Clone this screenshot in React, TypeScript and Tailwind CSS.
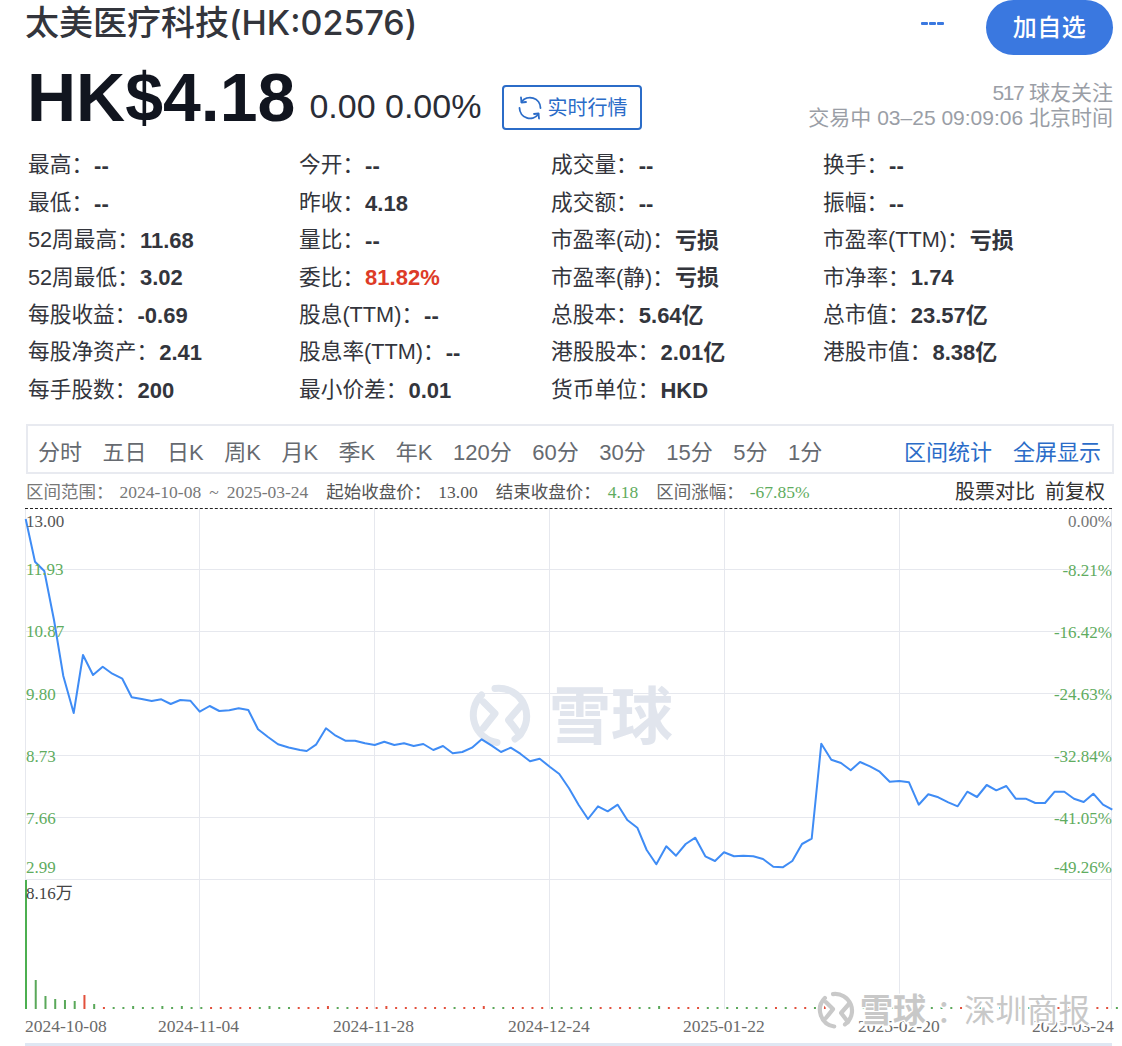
const SANS = "[font-family:'Liberation_Sans','Noto_Sans_CJK_SC',sans-serif]";

type Stat = { label: string; value: string; red?: boolean };

const stats: Stat[][] = [
  [
    { label: "最高", value: "--" },
    { label: "今开", value: "--" },
    { label: "成交量", value: "--" },
    { label: "换手", value: "--" },
  ],
  [
    { label: "最低", value: "--" },
    { label: "昨收", value: "4.18" },
    { label: "成交额", value: "--" },
    { label: "振幅", value: "--" },
  ],
  [
    { label: "52周最高", value: "11.68" },
    { label: "量比", value: "--" },
    { label: "市盈率(动)", value: "亏损" },
    { label: "市盈率(TTM)", value: "亏损" },
  ],
  [
    { label: "52周最低", value: "3.02" },
    { label: "委比", value: "81.82%", red: true },
    { label: "市盈率(静)", value: "亏损" },
    { label: "市净率", value: "1.74" },
  ],
  [
    { label: "每股收益", value: "-0.69" },
    { label: "股息(TTM)", value: "--" },
    { label: "总股本", value: "5.64亿" },
    { label: "总市值", value: "23.57亿" },
  ],
  [
    { label: "每股净资产", value: "2.41" },
    { label: "股息率(TTM)", value: "--" },
    { label: "港股股本", value: "2.01亿" },
    { label: "港股市值", value: "8.38亿" },
  ],
  [
    { label: "每手股数", value: "200" },
    { label: "最小价差", value: "0.01" },
    { label: "货币单位", value: "HKD" },
  ],
];

const tabs = ["分时", "五日", "日K", "周K", "月K", "季K", "年K", "120分", "60分", "30分", "15分", "5分", "1分"];

const line =
  "25.7,519 35,561.7 44.3,571 54,620 63.3,676 73.7,713 83,655 93,675 102.7,666.7 112.3,673.7 122.3,678.7 131.7,697.3 141.7,699 151.7,701 161.3,699.3 170.7,704 180.3,700 190.3,700.7 199.7,711.7 209.7,706 219.3,711 229.3,710.3 238.7,708.3 248.3,710 258,729.3 268,737 278,744.3 288.7,747.5 300,750 306.7,751 316,744.7 326,728.3 335.7,735.7 345.3,740.7 355,740.7 365,743.3 374.7,745 384.3,741.7 394.3,745 404,743.3 413.7,746 423.3,744 433.3,750 443,746 452.7,753.3 462.3,752 472,747.7 481.7,739.3 491.7,745.7 501,752 510.7,747.7 520.3,753.7 530,761.3 539.7,758.7 549.7,766.7 559.3,774 569,788.3 578.7,805 588,819 598,806.3 607.7,811.3 617.7,804.7 627.3,820 637.3,827.7 646.7,850 656.3,864.3 666.3,846.3 676,855.7 685.7,844 695.3,837.7 705.3,856.3 715,861 724,852.3 734,856.3 743.3,855.7 753.3,856.3 763,859 773.3,866.7 782.7,867.3 792.3,861 802,844 811.7,838.7 821.3,743.7 831.3,759.7 841,763 850.7,770.3 860,762 870,766.3 879.7,771.7 889.7,781.7 899.3,781 909,782.3 918.7,804.7 928.3,794.3 938.3,797.3 948.3,802.3 957.7,806.3 967.3,791.7 977,797 986.7,785 996.3,790.3 1006.3,786 1015.7,798.7 1025.7,798.7 1035.3,803 1045,803 1054.7,791.7 1064.3,791.7 1074,798.7 1083.7,802 1093.3,793.7 1103,804.7 1112.3,809.7";

// first bars have real heights, the rest are dots (upper case = a bit taller)
const firstBars: [number, string][] = [
  [129, "#4caf50"],
  [29, "#5aa85a"],
  [13, "#5aa85a"],
  [10, "#5aa85a"],
  [9, "#5aa85a"],
  [8, "#5aa85a"],
  [14, "#e2503c"],
  [5, "#5aa85a"],
];
const dots =
  "rggGggGgGggrrrrrgGggrrrRggrrrRrrrrrrgrrRggrrrrgg" +
  "gggrrrrggGrrrrgggggggrgrrgTgUggrggrgrgggrgggggggggrrrrrrg";

const hLines = [569.5, 631.5, 693.5, 755.5, 817.5, 879.5];
const vLines = [25.5, 199.5, 374.5, 549.5, 724.5, 899.5, 1111.5];

const leftLabels: [string, number, boolean][] = [
  ["13.00", 527, false],
  ["11.93", 575, true],
  ["10.87", 637, true],
  ["9.80", 700, true],
  ["8.73", 762, true],
  ["7.66", 824, true],
  ["2.99", 873, true],
];
const rightLabels: [string, number, boolean][] = [
  ["0.00%", 527, false],
  ["-8.21%", 576, true],
  ["-16.42%", 638, true],
  ["-24.63%", 700, true],
  ["-32.84%", 762, true],
  ["-41.05%", 824, true],
  ["-49.26%", 873, true],
];
const dates: [string, number][] = [
  ["2024-10-08", 25],
  ["2024-11-04", 158],
  ["2024-11-28", 333],
  ["2024-12-24", 508],
  ["2025-01-22", 683],
  ["2025-02-20", 858],
  ["2025-03-24", 1032],
];

function Logo({ color, width }: { color: string; width: number }) {
  return (
    <g fill="none" stroke={color} strokeWidth={width} strokeLinecap="round" strokeLinejoin="round">
      <path d="M495 688.5A28 28 0 0 1 515 739" />
      <path d="M481.5 695A28 28 0 0 0 497 742.5" />
      <path d="M483.5 702L495 713.5L483.5 728" />
      <path d="M521.5 705L508.5 720L520 735" />
    </g>
  );
}

function Chart() {
  const barX = (i: number) => 25 + i * 9.74;
  return (
    <svg width="1122" height="537" viewBox="0 509 1122 537" className={`block ${SANS}`}>
      {hLines.map((y) => (
        <line key={y} x1="25" x2="1112" y1={y} y2={y} stroke="#e6e8ee" />
      ))}
      {vLines.map((x) => (
        <line key={x} x1={x} x2={x} y1="509" y2="1009" stroke="#e6e8ee" />
      ))}

      {/* big watermark in the middle */}
      <Logo color="#e1e6ee" width={7} />
      <text x="549" y="739" className="fill-[#e1e5ed] text-[62px] font-bold">
        雪球
      </text>

      {firstBars.map(([h, c], i) => (
        <rect key={i} x={barX(i)} y={1009 - h} width="2" height={h} fill={c} />
      ))}
      {dots.split("").map((d, i) => {
        const up = d.toLowerCase();
        const h = d === "T" ? 12 : d === "U" ? 4 : d === up ? 2 : 3;
        const fill = d === "g" || d === "G" ? "#5aa85a" : d === "U" ? "#a8402f" : "#e2503c";
        return <rect key={i} x={barX(i + 8)} y={1009 - h} width="2" height={h} fill={fill} />;
      })}

      <polyline points={line} fill="none" stroke="#3f8cf5" strokeWidth="2" strokeLinejoin="round" />

      <g className="[font-family:'Liberation_Serif','Noto_Sans_CJK_SC',serif] text-[17px]">
        {leftLabels.map(([t, y, green]) => (
          <text key={t} x="26" y={y} fill={green ? "#5fac60" : "#555555"}>
            {t}
          </text>
        ))}
        {rightLabels.map(([t, y, green]) => (
          <text key={t} x="1112" y={y} textAnchor="end" fill={green ? "#5fac60" : "#777777"}>
            {t}
          </text>
        ))}
        <text x="26" y="899" fill="#444444">
          8.16万
        </text>
        {dates.map(([t, x]) => (
          <text key={t} x={x} y="1032" fill="#6a6a6a" className="text-[17.5px]">
            {t}
          </text>
        ))}
      </g>

      {/* author watermark, bottom right */}
      <g transform="translate(536 581) scale(0.6)">
        <Logo color="#ffffff" width={13} />
        <Logo color="#c9c9c9" width={7} />
      </g>
      <text
        x="860"
        y="1022"
        stroke="#ffffff"
        strokeWidth="3"
        className="fill-[#c8c8c8] text-[33px] font-bold [paint-order:stroke]"
      >
        雪球
      </text>
      <text
        x="936"
        y="1022"
        stroke="#ffffff"
        strokeWidth="3"
        className="fill-[#c8c8c8] text-[31.5px] [paint-order:stroke]"
      >
        ：
      </text>
      <text
        x="964"
        y="1022"
        stroke="#ffffff"
        strokeWidth="3"
        className="fill-[#c8c8c8] text-[31.5px] [paint-order:stroke]"
      >
        深圳商报
      </text>

      <rect x="25" y="1043" width="1087" height="3" fill="#dfe7f3" />
    </svg>
  );
}

export default function App() {
  return (
    <div className={`relative h-[1046px] w-[1122px] overflow-hidden bg-white ${SANS}`}>
      {/* Title row */}
      <div className="flex h-[55px] items-start justify-between pl-[25px] pr-[9px]">
        <h1 className="text-[34px] leading-[46px] font-medium text-[#33353c] [font-family:'Inter','Noto_Sans_CJK_SC',sans-serif]">
          太美医疗科技(HK:02576)
        </h1>
        <div className="flex items-start">
          <div className="mt-[22px] mr-[42px] flex gap-[1px]">
            <span className="h-[3px] w-[7px] rounded-[1px] bg-[#3a78e0]" />
            <span className="h-[3px] w-[7px] rounded-[1px] bg-[#3a78e0]" />
            <span className="h-[3px] w-[7px] rounded-[1px] bg-[#3a78e0]" />
          </div>
          <button className="flex h-[55px] w-[127px] items-center justify-center rounded-[28px] bg-[#3a78e0] text-[24px] font-medium tracking-[0.5px] text-white">
            加自选
          </button>
        </div>
      </div>

      {/* Price row */}
      <div className="flex h-[92px] items-start justify-between pl-[27px] pr-[9px]">
        <div className="flex items-start">
          <span className="text-[68px] leading-[84px] font-bold text-[#11151f]">HK$4.18</span>
          <span className="mt-[31px] ml-[14px] text-[34px] leading-[40px] text-[#2a2d36]">0.00 0.00%</span>
          <button className="mt-[30px] ml-[21px] flex h-[45px] w-[140px] items-center justify-center gap-[4px] rounded-[4px] border-2 border-[#2b6cc8] text-[20px] text-[#2b6cc8]">
            <svg width="26" height="26" viewBox="0 0 26 26" fill="none" stroke="#2b6cc8" strokeWidth="1.8" strokeLinecap="round" strokeLinejoin="round">
              <path d="M4.5 7A10.5 10.5 0 0 1 23.5 13" />
              <path d="M4 2.5L4.5 7.5L9 7" />
              <path d="M21.5 19A10.5 10.5 0 0 1 2.5 13" />
              <path d="M22 23.5L21.5 18.5L17 19" />
            </svg>
            实时行情
          </button>
        </div>
        <div className="mt-[25px] text-right text-[21px] leading-[25px] text-[#9a9ea6]">
          <div>
            <span className="tracking-[-1.5px]">517</span> 球友关注
          </div>
          <div>交易中 03–25 09:09:06 北京时间</div>
        </div>
      </div>

      {/* Stats */}
      <div className="ml-[28px] flex flex-col">
        {stats.map((row, r) => (
          <div key={r} className="grid h-[37.4px] grid-cols-[271px_252px_272px_1fr] items-center text-[21.7px] text-[#33353c]">
            {row.map((s) => (
              <div key={s.label} className="flex items-center whitespace-nowrap">
                <span>{s.label}：</span>
                <span className={`ml-[1px] text-[22px] font-bold ${s.red ? "text-[#dd3b27]" : ""}`}>{s.value}</span>
              </div>
            ))}
          </div>
        ))}
      </div>

      {/* Period tabs */}
      <div className="mt-[15px] ml-[26px] flex h-[50px] w-[1088px] items-center justify-between border-2 border-[#e8eaf0] pt-[7px] pr-[11px] pl-[10px] text-[22px] text-[#666a70]">
        <div className="flex gap-[20.5px]">
          {tabs.map((t) => (
            <span key={t}>{t}</span>
          ))}
        </div>
        <div className="flex gap-[21px] text-[#2b6cc8]">
          <span>区间统计</span>
          <span>全屏显示</span>
        </div>
      </div>

      {/* Range info */}
      <div className="ml-[26px] flex h-[34px] w-[1079px] items-center justify-between pt-[2px]">
        <div className="flex gap-[18px] text-[17.5px] text-[#777777] [font-family:'Liberation_Serif','Noto_Sans_CJK_SC',serif]">
          <span>
            区间范围：
            <span className="ml-[6px]">2024-10-08</span>
            <span className="mx-[8px]">~</span>
            2025-03-24
          </span>
          <span className="text-[#555555]">
            起始收盘价：<span className="ml-[7px]">13.00</span>
          </span>
          <span className="text-[#555555]">
            结束收盘价：<span className="ml-[7px] text-[#5fac60]">4.18</span>
          </span>
          <span className="text-[#666666]">
            区间涨幅：<span className="ml-[6px] text-[#5fac60]">-67.85%</span>
          </span>
        </div>
        <div className="flex gap-[10px] text-[20px] text-[#333333]">
          <span>股票对比</span>
          <span>前复权</span>
        </div>
      </div>
      <div className="ml-[25px] w-[1087px] border-t border-dashed border-[#222222]" />

      <Chart />
    </div>
  );
}
